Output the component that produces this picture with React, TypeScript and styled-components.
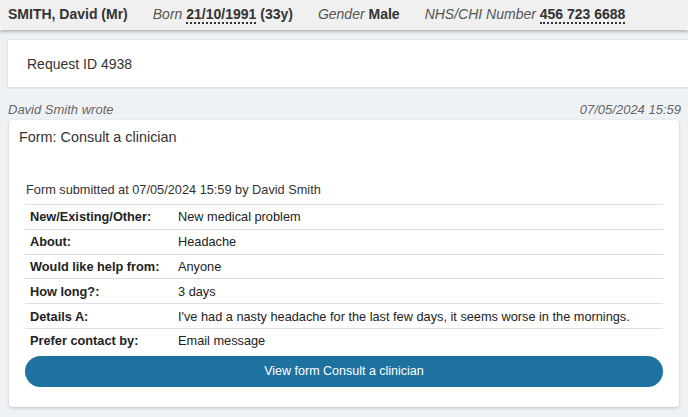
import styled, { createGlobalStyle } from 'styled-components';

const GlobalStyle = createGlobalStyle`
  html, body {
    margin: 0;
    padding: 0;
    background: #eff2f5;
    font-family: "Liberation Sans", Arial, sans-serif;
    color: #222;
  }
`;

const Page = styled.div`
  width: 688px;
  height: 417px;
  overflow: hidden;
  background: #eff2f5;
`;

const PatientBar = styled.header`
  height: 30px;
  background: #f0f0f0;
  box-shadow: 0 2px 3px rgba(0, 0, 0, 0.25);
  display: flex;
  align-items: center;
  gap: 25px;
  padding: 0 8px 2px;
  box-sizing: border-box;
  font-size: 14px;
  position: relative;
  z-index: 1;
`;

const PatientName = styled.span`
  font-weight: 700;
  color: #333;
`;

const Field = styled.span`
  font-style: italic;
  color: #555;

  & b {
    font-style: normal;
    color: #333;
  }
`;

const Dotted = styled.b`
  border-bottom: 2px dotted #333;
`;

const Main = styled.main`
  padding: 9px 0 0 7px;
`;

const RequestBox = styled.div`
  background: #fff;
  height: 47px;
  border: 1px solid #e2e4e6;
  border-right: none;
  border-bottom: 2px solid #dfe1e3;
  display: flex;
  align-items: center;
  padding-left: 19px;
  font-size: 14px;
  color: #333;
`;

const MetaRow = styled.div`
  display: flex;
  justify-content: space-between;
  padding: 13px 7px 0 1px;
  font-size: 13px;
  font-style: italic;
  color: #666;
`;

const Card = styled.section`
  margin: 3px 9px 0 2px;
  background: #fff;
  border-radius: 4px;
  box-shadow: 0 1px 3px rgba(0, 0, 0, 0.2);
  padding: 9px 16px 20px 16px;
`;

const CardTitle = styled.div`
  font-size: 14.4px;
  color: #333;
  margin-left: -6px;
`;

const Submitted = styled.div`
  font-size: 12.75px;
  color: #333;
  margin: 37px 0 0 1px;
  padding-bottom: 7px;
`;

const Table = styled.table`
  width: 100%;
  border-collapse: collapse;
  font-size: 12.75px;
  color: #222;

  & td {
    border-top: 1px solid #dedde3;
    height: 23.8px;
    padding: 0 5px;
  }

  & td:first-child {
    font-weight: 700;
    width: 138px;
  }
`;

const ViewButton = styled.button`
  display: block;
  width: 100%;
  height: 31px;
  margin-top: 3px;
  border: none;
  border-radius: 16px;
  background: #1d72a0;
  color: #fff;
  font-family: inherit;
  font-size: 12.5px;
`;

const rows: [string, string][] = [
  ['New/Existing/Other:', 'New medical problem'],
  ['About:', 'Headache'],
  ['Would like help from:', 'Anyone'],
  ['How long?:', '3 days'],
  ['Details A:', "I've had a nasty headache for the last few days, it seems worse in the mornings."],
  ['Prefer contact by:', 'Email message'],
];

export default function App() {
  return (
    <Page>
      <GlobalStyle />
      <PatientBar>
        <PatientName>SMITH, David (Mr)</PatientName>
        <Field>
          Born <Dotted>21/10/1991</Dotted> <b>(33y)</b>
        </Field>
        <Field>
          Gender <b>Male</b>
        </Field>
        <Field>
          NHS/CHI Number <Dotted>456 723 6688</Dotted>
        </Field>
      </PatientBar>
      <Main>
        <RequestBox>Request ID 4938</RequestBox>
        <MetaRow>
          <span>David Smith wrote</span>
          <span>07/05/2024 15:59</span>
        </MetaRow>
        <Card>
          <CardTitle>Form: Consult a clinician</CardTitle>
          <Submitted>Form submitted at 07/05/2024 15:59 by David Smith</Submitted>
          <Table>
            <tbody>
              {rows.map(([label, value]) => (
                <tr key={label}>
                  <td>{label}</td>
                  <td>{value}</td>
                </tr>
              ))}
            </tbody>
          </Table>
          <ViewButton>View form Consult a clinician</ViewButton>
        </Card>
      </Main>
    </Page>
  );
}
